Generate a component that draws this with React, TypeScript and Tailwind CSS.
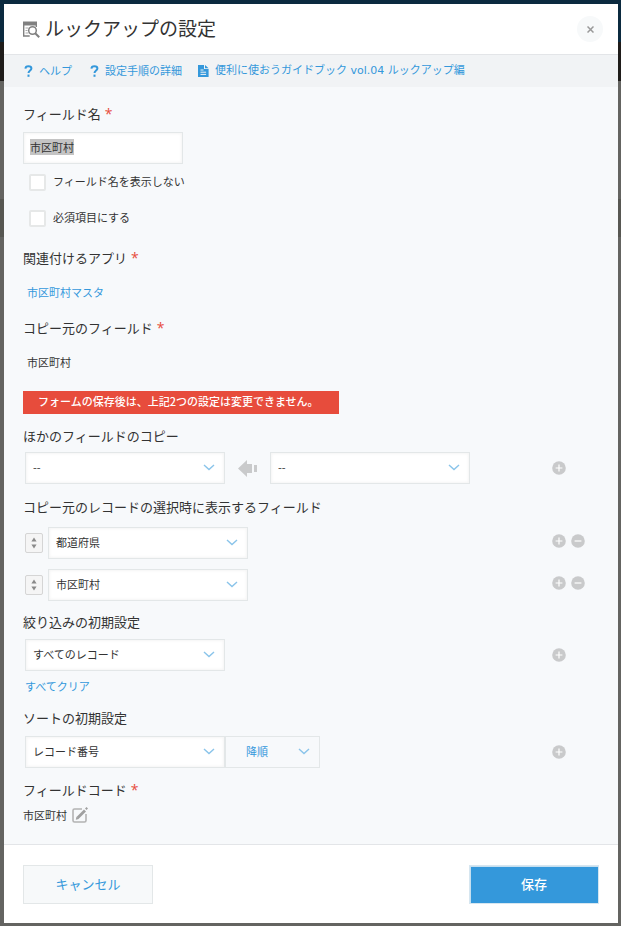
import { useEffect, useRef } from "react";
import type { ReactNode } from "react";

const DISPLAY_FIELDS = [
  { id: "display-0", value: "都道府県" },
  { id: "display-1", value: "市区町村" },
];

export default function App() {
  const nameRef = useRef<HTMLInputElement>(null);

  useEffect(() => {
    nameRef.current?.focus();
    nameRef.current?.select();
  }, []);

  return (
    <div className="min-h-screen bg-[linear-gradient(#0b2a3f_42px,#1f1c1a_42px,#1f1c1a_81px,#646461_81px,#646461_199px,#575752_199px,#575752_237px,#646461_237px)] pt-1 pr-[3px] pb-[3px] pl-1 font-['Noto_Sans_CJK_JP',sans-serif] text-[11px] text-[#333333]">
      <div role="dialog" aria-labelledby="dialog-title" className="bg-[#f7f9fb]">
        <header className="flex h-[51px] items-center justify-between border-b border-[#e3e5e8] bg-white pr-[15px] pl-[19px]">
          <div className="flex items-center gap-[5px]">
            <LookupIcon />
            <h1 id="dialog-title" className="pb-[3px] text-[19px] leading-6">ルックアップの設定</h1>
          </div>
          <button type="button" aria-label="閉じる" className="flex size-[26px] items-center justify-center rounded-full bg-[#f7f9fa]">
            <svg width="7" height="7" viewBox="0 0 7 7" stroke="#999999" strokeWidth="1.5">
              <path d="M.5.5l6 6M6.5.5l-6 6" />
            </svg>
          </button>
        </header>

        <nav className="flex h-8 items-center gap-[18px] bg-[#f1f3f5] pb-[2px] pl-5 text-[#3498db]">
          <a href="#help" className="flex items-center gap-[6px]">
            <QuestionIcon />
            ヘルプ
          </a>
          <a href="#steps" className="flex items-center gap-[6px]">
            <QuestionIcon />
            設定手順の詳細
          </a>
          <a href="#guide" className="-ml-[2px] flex items-center gap-[6px]">
            <FileIcon />
            <span>
              便利に使おうガイドブック<span className="font-['DejaVu_Sans']"> vol.04 </span>ルックアップ編
            </span>
          </a>
        </nav>

        <form className="px-[19px] pt-[17px] pb-[19px]">
          <Label htmlFor="field-name" required>フィールド名</Label>
          <input
            id="field-name"
            ref={nameRef}
            type="text"
            defaultValue="市区町村"
            className="mt-2 block h-8 w-40 border border-[#e3e7e8] bg-white px-[6px] pb-[3px] shadow-[inset_0_0_3px_1px_#f5f5f5] outline-none selection:bg-[#c4c4c4] selection:text-[#333333]"
          />
          <Check id="hide-name">フィールド名を表示しない</Check>
          <Check id="required">必須項目にする</Check>

          <div className="mt-3">
            <Label required>関連付けるアプリ</Label>
            <a href="#app" className="mt-3 ml-1 block w-fit leading-6 text-[#3498db]">市区町村マスタ</a>
          </div>

          <div className="mt-[14px]">
            <Label required>コピー元のフィールド</Label>
            <p className="mt-3 ml-1 leading-6">市区町村</p>
          </div>

          <p className="mt-[17px] h-[23px] w-fit bg-[#e74c3c] pr-5 pl-[15px] leading-5 font-medium text-white">
            フォームの保存後は、上記2つの設定は変更できません。
          </p>

          <div className="mt-3">
            <Label htmlFor="copy-to">ほかのフィールドのコピー</Label>
            <Row className="mt-[6px] ml-[2px]">
              <Select id="copy-to" value="--" />
              <CopyArrow />
              <Select id="copy-from" label="コピー元" value="--" />
            </Row>
          </div>

          <div className="mt-[13px]">
            <Label htmlFor="display-0">コピー元のレコードの選択時に表示するフィールド</Label>
            {DISPLAY_FIELDS.map((f) => (
              <Row key={f.id} className="mt-[10px] ml-[2px]" removable>
                <SortHandle />
                <Select id={f.id} label={f.id === "display-0" ? undefined : "表示するフィールド"} value={f.value} />
              </Row>
            ))}
          </div>

          <div className="mt-[11px]">
            <Label htmlFor="filter">絞り込みの初期設定</Label>
            <Row className="mt-[7px] ml-[2px]">
              <Select id="filter" value="すべてのレコード" />
            </Row>
            <a href="#clear" className="mt-[5px] ml-[2px] block w-fit leading-5 text-[#3498db]">すべてクリア</a>
          </div>

          <div className="mt-3">
            <Label htmlFor="sort">ソートの初期設定</Label>
            <Row className="mt-2 ml-[2px]">
              <Select id="sort" value="レコード番号" />
              <div className="relative w-[95px]">
                <select
                  aria-label="並び順"
                  className="h-8 w-full appearance-none border border-[#e3e7e8] bg-[#f7f9fb] pb-[2px] pl-5 text-[#3498db] outline-none"
                >
                  <option>降順</option>
                </select>
                <Chevron />
              </div>
            </Row>
          </div>

          <div className="mt-3">
            <Label required>フィールドコード</Label>
            <div className="mt-[5px] flex h-5 items-center gap-[5px]">
              <span>市区町村</span>
              <button type="button" aria-label="編集">
                <EditIcon />
              </button>
            </div>
          </div>
        </form>

        <footer className="flex justify-between border-t border-[#e3e5e8] bg-white px-[19px] pt-5 pb-[19px] text-[13px]">
          <button type="button" className="h-[39px] w-[130px] border border-[#e3e7e8] bg-[#f7f9fa] pb-[2px] text-[#3498db]">
            キャンセル
          </button>
          <button type="submit" className="h-[39px] w-[130px] border border-[#d6e6f0] bg-[#3498db] pb-[2px] font-medium text-white shadow-[inset_1px_1px_0_#c5dff0]">
            保存
          </button>
        </footer>
      </div>
    </div>
  );
}

function Label({ htmlFor, required, children }: { htmlFor?: string; required?: boolean; children: ReactNode }) {
  const body = (
    <>
      {children}
      {required && <span className="ml-1 font-['Open_Sans'] text-sm leading-none text-[#e74c3c]">*</span>}
    </>
  );
  if (!htmlFor) return <h2 className="h-5 text-[13px] leading-5">{body}</h2>;
  return <label htmlFor={htmlFor} className="block h-5 text-[13px] leading-5">{body}</label>;
}

function Check({ id, children }: { id: string; children: ReactNode }) {
  return (
    <div className="ml-[6px] flex h-9 items-center gap-[7px]">
      <input id={id} type="checkbox" className="size-[17px] appearance-none rounded-[2px] border-2 border-[#e6e8e8] bg-white checked:bg-[#3498db]" />
      <label htmlFor={id} className="pb-[2px]">{children}</label>
    </div>
  );
}

function Row({ className, removable, children }: { className: string; removable?: boolean; children: ReactNode }) {
  return (
    <div className={`flex items-center justify-between ${className}`}>
      <div className="flex items-center">{children}</div>
      <div className={`flex w-[47px] gap-[5px] ${removable ? "pb-[5px]" : ""}`}>
        <RoundButton label="追加" d="M7 3.600v6.800M3.600 7h6.800" />
        {removable && <RoundButton label="削除" d="M3.600 7h6.800" />}
      </div>
    </div>
  );
}

function RoundButton({ label, d }: { label: string; d: string }) {
  return (
    <button type="button" aria-label={label}>
      <svg width="14" height="14" viewBox="0 0 14 14" className="block">
        <circle cx="7" cy="7" r="6.8" fill="#c9cacb" />
        <path d={d} stroke="#fff" strokeWidth="1.2" />
      </svg>
    </button>
  );
}

function Select({ id, label, value }: { id: string; label?: string; value: string }) {
  return (
    <div className="relative w-[200px]">
      <select
        id={id}
        aria-label={label}
        className="h-8 w-full appearance-none border border-[#e3e7e8] bg-white pb-[2px] pl-[7px] shadow-[inset_0_0_3px_1px_#f5f5f5] outline-none"
      >
        <option>{value}</option>
      </select>
      <Chevron />
    </div>
  );
}

function Chevron() {
  return (
    <svg width="12" height="7" viewBox="0 0 12 7" fill="none" stroke="#8ac4ea" strokeWidth="1.4" className="pointer-events-none absolute top-3 right-[10px]">
      <path d="M1 1l5 4.6L11 1" />
    </svg>
  );
}

function SortHandle() {
  return (
    <button type="button" aria-label="並べ替え" className="mr-[5px] flex h-5 w-[18px] items-center justify-center rounded-[2px] border border-[#d5d5d5] bg-[#f5f5f5]">
      <svg width="6" height="12" viewBox="0 0 6 12" fill="#8a8a8a">
        <path d="M3 .5l2.6 4H.4zM3 11.5L.4 7.5h5.2z" />
      </svg>
    </button>
  );
}

function CopyArrow() {
  return (
    <svg width="19" height="17" viewBox="0 0 19 17" fill="#c9cacb" className="mx-[13px]">
      <path d="M0 8.5L9 0v4h5v9H9v4zM16 5h3v7h-3z" />
    </svg>
  );
}

function LookupIcon() {
  return (
    <svg width="17" height="17" viewBox="0 0 17 17" fill="none" stroke="#808080">
      <path d="M0 2.5h14" strokeWidth="4" />
      <path d="M.7 4v11h6M13.3 3v3" strokeWidth="1.4" />
      <path d="M2.5 7h3M2.5 9.5h2M2.5 12h3" strokeWidth="1" stroke="#aaaaaa" />
      <circle cx="9.5" cy="9.5" r="3.8" strokeWidth="1.5" fill="#fff" />
      <path d="M12.2 12.2l4 4" strokeWidth="2" />
    </svg>
  );
}

function QuestionIcon() {
  return (
    <svg width="9" height="12" viewBox="0 0 9 12" fill="none" stroke="currentColor" strokeWidth="2" className="mt-[2px]">
      <path d="M1.4 3.6C1.5 2 2.7 1.2 4.4 1.2c1.8 0 3 .8 3 2.2 0 2-2.9 2.1-2.9 4.6" />
      <path d="M4.5 9.6v2.2" />
    </svg>
  );
}

function FileIcon() {
  return (
    <svg width="11" height="12" viewBox="0 0 11 12" className="mt-[2px]">
      <path d="M0 0h6v4h4.6v8H0zM7 0l3.6 3.3H7z" fill="currentColor" />
      <path d="M2.5 5h3M2.5 7.2h5.6M2.5 9.4h5.6" stroke="#f1f3f5" />
    </svg>
  );
}

function EditIcon() {
  return (
    <svg width="16" height="16" viewBox="0 0 16 16" fill="none" stroke="#b3b3b3" className="block">
      <path d="M10 2H2.5Q1 2 1 3.5V13.5Q1 15 2.5 15H12.5Q14 15 14 13.5V7" strokeWidth="1.6" />
      <path d="M5.5 11L13 3.5" strokeWidth="2.8" stroke="#a0a0a0" />
      <path d="M3.8 12.7l.7-3 2.3 2.3zM13 1.5L14.5 0 16 1.5 14.5 3z" fill="#a0a0a0" stroke="none" />
    </svg>
  );
}
